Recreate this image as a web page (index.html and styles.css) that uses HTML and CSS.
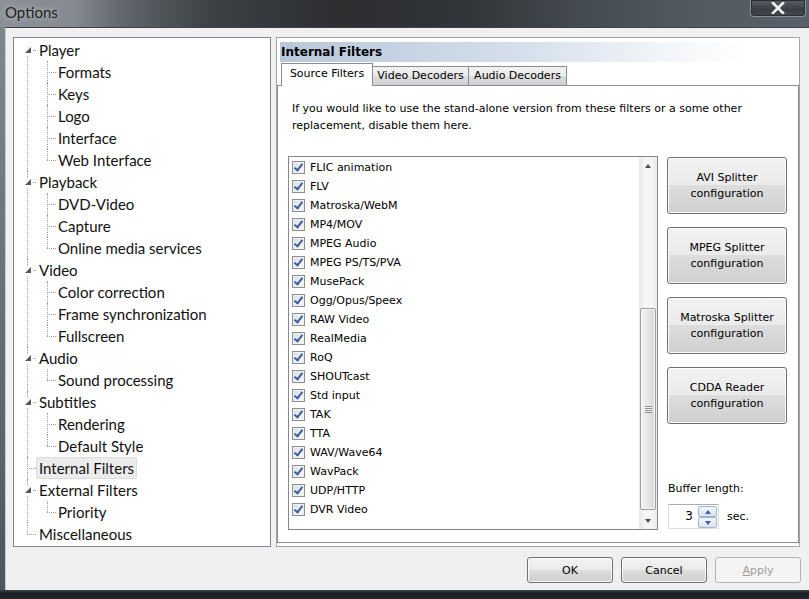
FILE: index.html
```html
<!DOCTYPE html>
<html>
	<head>
		<meta charset="UTF-8">
		<title>Options</title>
		<link rel="stylesheet" href="styles.css">
	</head>
	<body>
		<div class="window">
			<div class="titlebar">
				<span class="title">Options</span>
				<span class="close">
					<svg width="14" height="12" viewBox="0 0 14 12"><path d="M2 1L12 11M12 1L2 11" stroke="#f2f2f2" stroke-width="2.6" stroke-linecap="square"/></svg>
				</span>
			</div>
			<div class="frame">
				<div class="client">
					<div class="panes">
						<div class="tree">
							<ul class="root">
								<li><span class="tog"></span><span class="lbl">Player</span>
									<ul class="sub">
										<li><span class="lbl">Formats</span></li>
										<li><span class="lbl">Keys</span></li>
										<li><span class="lbl">Logo</span></li>
										<li><span class="lbl">Interface</span></li>
										<li><span class="lbl">Web Interface</span></li>
									</ul>
								</li>
								<li><span class="tog"></span><span class="lbl">Playback</span>
									<ul class="sub">
										<li><span class="lbl">DVD-Video</span></li>
										<li><span class="lbl">Capture</span></li>
										<li><span class="lbl">Online media services</span></li>
									</ul>
								</li>
								<li><span class="tog"></span><span class="lbl">Video</span>
									<ul class="sub">
										<li><span class="lbl">Color correction</span></li>
										<li><span class="lbl">Frame synchronization</span></li>
										<li><span class="lbl">Fullscreen</span></li>
									</ul>
								</li>
								<li><span class="tog"></span><span class="lbl">Audio</span>
									<ul class="sub">
										<li><span class="lbl">Sound processing</span></li>
									</ul>
								</li>
								<li><span class="tog"></span><span class="lbl">Subtitles</span>
									<ul class="sub">
										<li><span class="lbl">Rendering</span></li>
										<li><span class="lbl">Default Style</span></li>
									</ul>
								</li>
								<li><span class="lbl sel">Internal Filters</span></li>
								<li><span class="tog"></span><span class="lbl">External Filters</span>
									<ul class="sub">
										<li><span class="lbl">Priority</span></li>
									</ul>
								</li>
								<li><span class="lbl">Miscellaneous</span></li>
							</ul>
						</div>
						<div class="page">
							<div class="page-head">Internal Filters</div>
							<div class="tabs">
								<span class="tab active">Source Filters</span>
								<span class="tab video">Video Decoders</span>
								<span class="tab audio">Audio Decoders</span>
							</div>
							<div class="tab-body">
								<p class="hint">If you would like to use the stand-alone version from these filters or a some other<br>replacement, disable them here.</p>
								<div class="filter-row">
									<div class="listbox">
										<div class="items">
											<div class="item"><span class="cb"></span>FLIC animation</div>
											<div class="item"><span class="cb"></span>FLV</div>
											<div class="item"><span class="cb"></span>Matroska/WebM</div>
											<div class="item"><span class="cb"></span>MP4/MOV</div>
											<div class="item"><span class="cb"></span>MPEG Audio</div>
											<div class="item"><span class="cb"></span>MPEG PS/TS/PVA</div>
											<div class="item"><span class="cb"></span>MusePack</div>
											<div class="item"><span class="cb"></span>Ogg/Opus/Speex</div>
											<div class="item"><span class="cb"></span>RAW Video</div>
											<div class="item"><span class="cb"></span>RealMedia</div>
											<div class="item"><span class="cb"></span>RoQ</div>
											<div class="item"><span class="cb"></span>SHOUTcast</div>
											<div class="item"><span class="cb"></span>Std input</div>
											<div class="item"><span class="cb"></span>TAK</div>
											<div class="item"><span class="cb"></span>TTA</div>
											<div class="item"><span class="cb"></span>WAV/Wave64</div>
											<div class="item"><span class="cb"></span>WavPack</div>
											<div class="item"><span class="cb"></span>UDP/HTTP</div>
											<div class="item"><span class="cb"></span>DVR Video</div>
										</div>
										<div class="vscroll">
											<div class="sb-btn"><span class="arr up"></span></div>
											<div class="sb-track">
												<div class="sb-thumb"><span class="grip"></span></div>
											</div>
											<div class="sb-btn"><span class="arr down"></span></div>
										</div>
									</div>
									<div class="side">
										<button class="btn big">AVI Splitter<br>configuration</button>
										<button class="btn big">MPEG Splitter<br>configuration</button>
										<button class="btn big">Matroska Splitter<br>configuration</button>
										<button class="btn big">CDDA Reader<br>configuration</button>
										<div class="buffer">
											<div class="buffer-lbl">Buffer length:</div>
											<div class="buffer-row">
												<div class="spin">
													<span class="spin-val">3</span>
													<span class="spin-btns">
														<span class="spin-b"><span class="arr up blue"></span></span>
														<span class="spin-b"><span class="arr down blue"></span></span>
													</span>
												</div>
												<span class="unit">sec.</span>
											</div>
										</div>
									</div>
								</div>
							</div>
						</div>
					</div>
					<div class="actions">
						<button class="btn act">OK</button>
						<button class="btn act">Cancel</button>
						<button class="btn act off"><u>A</u>pply</button>
					</div>
				</div>
			</div>
			<div class="taskbar"></div>
		</div>
	</body>
</html>
```

FILE: styles.css
```css
*{
	box-sizing: border-box;
}
body{
	margin: 0;
	background: #1c2025;
	font: 11px "DejaVu Sans", sans-serif;
	color: #000;
}
.window{
	width: 809px;
	height: 599px;
	display: flex;
	flex-direction: column;
	overflow: hidden;
}
.titlebar{
	height: 27px;
	display: flex;
	justify-content: space-between;
	align-items: flex-start;
	background: linear-gradient(90deg, #8b9197 0%, #858b90 9%, #5d6368 16%, #3d4146 26%, #2c2e30 42%, #323539 58%, #454b52 72%, #535a61 86%, #59606a 100%);
}
.title{
	font: 15px Lato, sans-serif;
	color: #1d1f22;
	padding: 3px 0 0 5px;
	text-shadow: 0 0 6px rgba(230,232,235,0.7);
}
.close{
	width: 56px;
	height: 17px;
	margin-right: 3px;
	display: flex;
	align-items: center;
	justify-content: center;
	border: 1px solid #8b9096;
	border-top: none;
	border-radius: 0 0 4px 4px;
	background: linear-gradient(#5a5f66, #3a3e44 60%, #44494f);
	box-shadow: inset 0 0 0 1px #2b2e33;
}
.frame{
	height: 563px;
	padding-left: 5px;
	background: linear-gradient(#7f868c, #4e555c);
}
.client{
	height: 100%;
	background: #f0f0f0;
	border-top: 1px solid #3d4146;
	border-left: 1px solid #c9cdd1;
	padding: 9px 8px 0 7px;
}
.panes{
	display: flex;
	gap: 5px;
	height: 510px;
}

/* tree */
.tree{
	width: 258px;
	border: 1px solid #828790;
	background: #fff;
	padding-top: 1px;
	font: 15px Lato, sans-serif;
	color: #111;
}
.tree ul{
	list-style: none;
	margin: 0;
	padding: 0;
}
.root > li{
	position: relative;
	padding-left: 25px;
}
.sub > li{
	position: relative;
	padding-left: 19px;
}
.root > li::before,
.sub > li::before{
	content: '';
	position: absolute;
	left: 13px;
	top: 0;
	bottom: 0;
	border-left: 1px dotted #9a9a9a;
}
.sub > li::before{
	left: 8px;
}
.root > li:first-child::before{
	top: 11px;
}
.root > li:last-child::before,
.sub > li:last-child::before{
	bottom: auto;
	height: 11px;
}
.root > li::after,
.sub > li::after{
	content: '';
	position: absolute;
	left: 13px;
	top: 11px;
	width: 9px;
	border-top: 1px dotted #9a9a9a;
}
.sub > li::after{
	left: 8px;
}
.tog{
	position: absolute;
	left: 9px;
	top: 6px;
	width: 10px;
	height: 10px;
	background: #fff;
	z-index: 1;
}
.tog::after{
	content: '';
	position: absolute;
	right: 2px;
	bottom: 2px;
	border-left: 6px solid transparent;
	border-bottom: 6px solid #575757;
}
.lbl{
	display: inline-block;
	height: 22px;
	line-height: 20px;
	padding: 0 2px;
	margin-left: -3px;
	border: 1px solid transparent;
	white-space: nowrap;
	vertical-align: top;
}
.lbl.sel{
	background: #ececec;
	border-color: #dadada;
	border-radius: 2px;
}

/* right page */
.page{
	width: 524px;
	border: 1px solid #a5a5a5;
	background: #fff;
	padding: 4px 0 3px 0;
	display: flex;
	flex-direction: column;
}
.page-head{
	height: 20px;
	line-height: 21px;
	margin-left: 3px;
	padding-left: 1px;
	font-weight: bold;
	font-size: 12px;
	background: linear-gradient(90deg, #b8c7da 0%, #d4deea 45%, #f3f6f9 75%, #fff 90%);
}
.tabs{
	display: flex;
	align-items: flex-end;
	height: 22px;
	margin: 1px 0 0 4px;
	position: relative;
	z-index: 1;
}
.tab{
	height: 19px;
	line-height: 17px;
	text-align: center;
	border: 1px solid #898c95;
	border-bottom: none;
	background: linear-gradient(#f2f2f2 0%, #ebebeb 50%, #dddddd 51%, #cfcfcf 100%);
}
.tab.active{
	width: 92px;
	height: 23px;
	line-height: 19px;
	margin-bottom: -1px;
	background: #fff;
}
.tab.video{
	width: 97px;
	margin-left: -1px;
}
.tab.audio{
	width: 99px;
	margin-left: -1px;
}
.tab-body{
	flex: 1;
	border: 1px solid #898c95;
	margin-right: 0;
	padding: 14px 0 0 10px;
}
.hint{
	margin: 0 0 22px 4px;
	line-height: 17px;
}
.filter-row{
	display: flex;
	align-items: flex-start;
}

/* list */
.listbox{
	width: 370px;
	height: 374px;
	border: 1px solid #828790;
	display: flex;
}
.items{
	flex: 1;
	padding: 1px 0 0 3px;
}
.item{
	height: 19px;
	display: flex;
	align-items: center;
	white-space: nowrap;
}
.cb{
	position: relative;
	width: 13px;
	height: 13px;
	margin-right: 5px;
	border: 1px solid #8e8f8f;
	background: linear-gradient(135deg, #d9dee5, #f7f8f9);
	box-shadow: inset 0 0 0 1px #eef0f2;
}
.cb::after{
	content: '';
	position: absolute;
	left: 3px;
	top: 0;
	width: 3px;
	height: 7px;
	border: solid #3b5c9f;
	border-width: 0 2px 2px 0;
	transform: rotate(38deg);
}
.vscroll{
	width: 18px;
	display: flex;
	flex-direction: column;
	background: linear-gradient(90deg, #e6e6e6, #f5f5f5 30%, #f5f5f5 70%, #ebebeb);
}
.sb-btn{
	height: 17px;
	display: flex;
	align-items: center;
	justify-content: center;
}
.sb-track{
	flex: 1;
	padding: 134px 1px 0 1px;
}
.sb-thumb{
	height: 202px;
	border: 1px solid #9b9b9b;
	border-radius: 2px;
	background: linear-gradient(90deg, #f2f2f2, #e6e6e6 50%, #d6d6d6);
	box-shadow: inset 0 0 0 1px #fafafa;
	display: flex;
	align-items: center;
	justify-content: center;
}
.grip{
	width: 7px;
	height: 7px;
	background: repeating-linear-gradient(#8c8c8c 0, #8c8c8c 1px, #f4f4f4 1px, #f4f4f4 2px);
}
.arr{
	width: 0;
	height: 0;
	border-left: 3px solid transparent;
	border-right: 3px solid transparent;
}
.arr.up{
	border-bottom: 4px solid #505050;
}
.arr.down{
	border-top: 4px solid #505050;
}
.arr.blue.up{
	border-bottom-color: #3f62a8;
}
.arr.blue.down{
	border-top-color: #3f62a8;
}

/* side column */
.side{
	width: 120px;
	height: 374px;
	margin-left: 9px;
	padding: 1px 0;
	display: flex;
	flex-direction: column;
	gap: 13px;
}
.btn{
	font: 11px "DejaVu Sans", sans-serif;
	color: #000;
	border: 1px solid #707070;
	border-radius: 3px;
	background: linear-gradient(#f2f2f2 0%, #ebebeb 49%, #dddddd 50%, #cfcfcf 100%);
	box-shadow: inset 0 0 0 1px #fbfbfb;
	padding: 0;
}
.btn.big{
	height: 57px;
	line-height: 16px;
}
.buffer{
	margin-top: auto;
}
.buffer-lbl{
	line-height: 16px;
	margin-bottom: 7px;
	margin-left: 1px;
}
.buffer-row{
	display: flex;
	align-items: center;
	gap: 8px;
	margin-left: 1px;
}
.spin{
	width: 51px;
	height: 25px;
	display: flex;
	background: #fff;
	border: 1px solid #dbdfe6;
	border-top-color: #abadb3;
}
.spin-val{
	flex: 1;
	text-align: right;
	padding-right: 5px;
	line-height: 23px;
	font-size: 12px;
}
.spin-btns{
	width: 20px;
	display: flex;
	flex-direction: column;
	padding: 1px 1px 0 0;
}
.spin-b{
	flex: 1;
	display: flex;
	align-items: center;
	justify-content: center;
	border: 1px solid #a6b3c6;
	border-radius: 2px;
	background: linear-gradient(#f2f5fa, #d9e3ef);
}

/* bottom buttons */
.actions{
	display: flex;
	justify-content: flex-end;
	gap: 8px;
	margin-top: 10px;
}
.btn.act{
	width: 86px;
	height: 26px;
}
.btn.off{
	color: #9c9c9c;
	border-color: #adb2b5;
	background: #f4f4f4;
	box-shadow: none;
}
.taskbar{
	flex: 1;
	background: linear-gradient(#3b4249, #1b1f24 40%, #20262c);
}
```
